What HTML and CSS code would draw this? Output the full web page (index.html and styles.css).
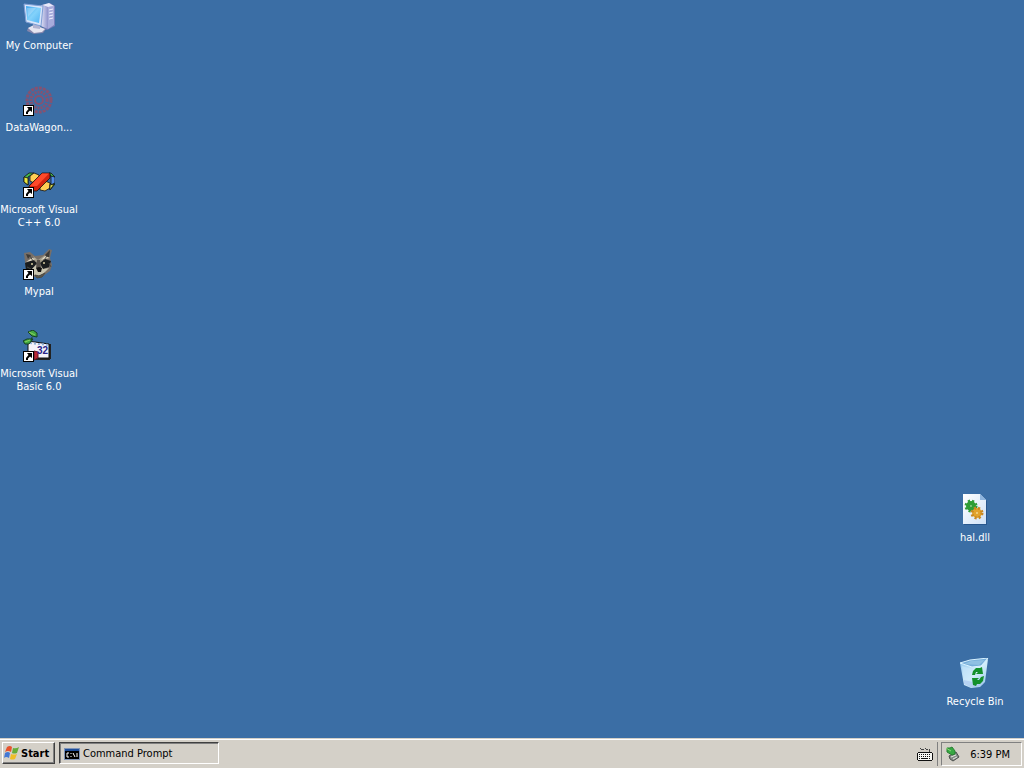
FILE: index.html
```html
<!DOCTYPE html>
<html lang="en">
<head>
<meta charset="utf-8">
<title>Desktop</title>
<link rel="stylesheet" href="styles.css">
</head>
<body>
<svg class="defs" width="0" height="0" aria-hidden="true">
  <defs>
    <linearGradient id="screen" x1="0" y1="0" x2="1" y2="1"><stop offset="0" stop-color="#3fa5ee"/><stop offset=".5" stop-color="#83d2fb"/><stop offset="1" stop-color="#4fb2f3"/></linearGradient>
    <linearGradient id="tower" x1="0" y1="0" x2="1" y2="0"><stop offset="0" stop-color="#dfe1f5"/><stop offset="1" stop-color="#8f93cc"/></linearGradient>
    <linearGradient id="bin" x1="0" y1="0" x2="1" y2="1"><stop offset="0" stop-color="#8cc4ee"/><stop offset=".5" stop-color="#d5effb"/><stop offset="1" stop-color="#8fc4e8"/></linearGradient>
    <linearGradient id="page" x1="0" y1="0" x2="1" y2="1"><stop offset="0" stop-color="#fff"/><stop offset="1" stop-color="#cfe2f8"/></linearGradient>
    <g id="shortcut"><path d="M0 21h11v11H0z" fill="#000"/><path d="M1 22h9v9H1z" fill="#fff"/><path d="M4 23h5v5l-2-1.500-2 2V30H3v-2l2.500-3z" fill="#000"/></g>
  </defs>
</svg>
<main class="desktop">
  <nav class="icons" aria-label="Desktop icons">
    <a class="item" href="#computer">
      <svg class="icon" viewBox="0 0 32 32">
        <path d="M19 3l8-2 5 3v20l-8 4-6-4z" fill="#777cba"/>
        <path d="M18 3l7 2v22l-7-3z" fill="url(#tower)"/><path d="M25 5l6-1v19l-6 4z" fill="#a7abdb"/><path d="M19 3l7-2 5 3-6 1z" fill="#e7e9fa"/>
        <path d="M26 8l4-1M26 11l4-1M26 14l4-1M26 17l4-1" stroke="#f0f0ff" stroke-width="1"/>
        <path d="M5 26l6-3 12 4-3 4-9 1-7-3z" fill="#8486ac"/><path d="M5 26l6-3 11 4-3 3-8 1z" fill="#e6e5f0"/>
        <path d="M10 21l7 1v5l-7-1z" fill="#b1b3d1"/>
        <path d="M1 2l19 2-2 20L3 20z" fill="#d8e5fa" stroke="#7e9ed5"/><path d="M3 4l15 2-2 15L4 18z" fill="url(#screen)"/>
        <path d="M4 6l9 0-8 9z" fill="#fff" opacity=".25"/>
      </svg><span class="label">My Computer</span></a>
    <a class="item" href="#datawagon">
      <svg class="icon" viewBox="0 0 32 32">
        <g fill="none" stroke="#b64150" opacity=".6"><circle cx="16" cy="16" r="12" stroke-width="3" stroke-dasharray="3 1"/><circle cx="16" cy="16" r="8" stroke-width="3" stroke-dasharray="2 1"/><circle cx="16" cy="16" r="4" stroke-width="2"/></g>
        <use href="#shortcut"/>
      </svg><span class="label">DataWagon...</span></a>
    <a class="item" href="#visual-cpp">
      <svg class="icon" viewBox="0 0 32 32" stroke="#111" stroke-width=".8">
        <path d="M1 11l5-4h5l-6 4v8l-4-3z" fill="#45b94a"/><path d="M1 11l4 1v7l-4-3z" fill="#e8e53f"/>
        <path d="M7 10l4-3 5 2v5l-5 3-4-2z" fill="#ffce55"/><path d="M17 19l5-4 5 2v5l-5 3-5-1z" fill="#ffce55"/>
        <path d="M26 7h2l4 4v7l-5 6v-6l2-2v-4z" fill="#45b94a"/><path d="M28 10l4 1v6l-4 2z" fill="#508ce9"/><path d="M27 19l4-1-4 6z" fill="#eded54"/>
        <path d="M6 20L19 7l8 0v5L14 25l-8 0z" fill="#d5240f"/><path d="M7 20L19 7.500h7L14 20z" fill="#ff4a2a" stroke="none"/>
        <g stroke="none"><use href="#shortcut"/></g>
      </svg><span class="label">Microsoft Visual<br>C++ 6.0</span></a>
    <a class="item" href="#mypal">
      <svg class="icon" viewBox="0 0 32 32">
        <path d="M1 5l6-1 5 4 8-1 6-6 3 1-2 8 2 7-2 6-7 5-5 2-6-2-6-7-1-7z" fill="#776f68"/>
        <path d="M3 6l5 1-3 4zM22 7l5-5-1 8z" fill="#3c3a37"/><path d="M10 8l5 4 7-5-3 8h-6z" fill="#a09a88"/>
        <path d="M2 15l8-3 4 3-5 6-6 1zM17 15l5-4 6 2-2 6-6 2z" fill="#191c1e"/><path d="M3 14l6-4 4 1-6 2zM18 12l4-4 5 2-6 1z" fill="#e4dcc7"/>
        <path d="M3 22l6-1 4-4 4 0 3 4 6-1-6 6-5 2-6-2z" fill="#c9c5b0"/><path d="M14 12h3l1 8h-5z" fill="#55504a"/><path d="M13 20l3-1 3 1-1 4h-3z" fill="#111"/><circle cx="9" cy="16" r="1" fill="#d7cda0"/><circle cx="21" cy="15" r="1" fill="#d7cda0"/>
        <path d="M12 27l4 1 6-3-3 4-5 1zM7 8l3 5M24 8l-3 4M26 15l2 4M4 19l4 2" stroke="#4b4a43" fill="#5f594e"/>
        <use href="#shortcut"/>
      </svg><span class="label">Mypal</span></a>
    <a class="item" href="#visual-basic">
      <svg class="icon" viewBox="0 0 32 32">
        <path d="M8 28h19v2H8zM26 14h2v15h-2z" fill="#222"/><path d="M5 11l21 3v14H9L5 23z" fill="#f4f3fb" stroke="#111"/><path d="M7 13l18 2" stroke="#92b2d8" stroke-width="2" stroke-dasharray="2 2"/>
        <path d="M11 21l4 1v6l-4 2z" fill="#b92734" stroke="#651520"/>
        <text class="number" x="14" y="24">32</text>
        <path d="M5 2l5-2 4 3v4l-5-1zM0 11l4-2 6 0-4 5H2z" fill="#42a744" stroke="#153f20"/><path d="M6 2l6 3M2 12l5-2" stroke="#8bd45d"/><path d="M9 7l-1 5" stroke="#174d22"/>
        <use href="#shortcut"/>
      </svg><span class="label">Microsoft Visual<br>Basic 6.0</span></a>
    <a class="item hal" href="#hal">
      <svg class="icon" viewBox="0 0 32 32">
        <path d="M5 1h17l6 6v24H5z" fill="#28578e"/><path d="M4 0h17l6 6v24H4z" fill="url(#page)"/><path d="M21 0v6h6z" fill="#8eb5df"/>
        <circle cx="12" cy="12" r="3" fill="#8ccc84" stroke="#2f9d36" stroke-width="4"/><circle cx="12" cy="12" r="5" fill="none" stroke="#2f9d36" stroke-width="3" stroke-dasharray="2 2"/>
        <circle cx="18" cy="19" r="3" fill="#f5d68b" stroke="#e2a32c" stroke-width="4"/><circle cx="18" cy="19" r="5" fill="none" stroke="#c98822" stroke-width="3" stroke-dasharray="2 2"/>
      </svg><span class="label">hal.dll</span></a>
    <a class="item recycle" href="#recycle">
      <svg class="icon" viewBox="0 0 32 32">
        <path d="M1 5l12 3L29 1l-3 23-5 5-9 1-7-3z" fill="url(#bin)"/><path d="M1 5l10-3 18-2-7 8-9 1z" fill="#75add9" stroke="#d9f2ff"/><path d="M5 6l7-3 14-1-6 5z" fill="#8fc0e3"/><path d="M3 8l10 3 1 17-6-1-3-2z" fill="#c9e7fb" opacity=".65"/><path d="M5 22l9 2 11-2-1 4-5 3-8 0-6-3z" fill="#aac6ee" opacity=".65"/>
        <path d="M13 17l1-4 3-3h4l2-1 1 7h-7l2-2-2 0-1 3zM25 18l-1 5-3 3h-3l-1 2-3-1-1-7h7l-2 2h2l2-3z" fill="#13902c"/>
      </svg><span class="label">Recycle Bin</span></a>
  </nav>
</main>
<footer class="taskbar">
  <button class="start" type="button">
    <svg class="small" viewBox="0 0 16 16"><path d="M3 2q3-2 5 0L7 7Q4 5 1 7z" fill="#e7532d"/><path d="M9 3q3 1 6-1l-2 6q-3 1-5 0z" fill="#66ad38"/><path d="M1 8q3-2 5 0l-1 5q-3-2-5 0z" fill="#4378d4"/><path d="M7 9q3 1 6 0l-2 5q-3 1-5 0z" fill="#efbd27"/></svg>Start</button>
  <button class="task" type="button">
    <svg class="small" viewBox="0 0 16 16"><path d="M0 2h16v12H0z" fill="#7e94b8"/><path d="M1 3h14v10H1z" fill="#000"/><path d="M1 3h14v2H1z" fill="#1c4c9a"/><path d="M5 7H3v4h2M7 7v1M7 10v1M9 7l2 4M13 7v4" fill="none" stroke="#fff"/></svg>Command Prompt</button>
  <span class="space"></span>
  <button class="keyboard" type="button" aria-label="Keyboard">
    <svg class="small" viewBox="0 0 16 16" shape-rendering="crispEdges"><path d="M3 1h1v1h2v1h-2v-1h-1zM6 2h1v1h-1zM8 1h1v1h2v1h-2v-1h-1zM12 2h1v3h-1z" fill="#444"/><path d="M1 5h14v1h1v7h-1v1H1v-1H0V6h1z" fill="#111"/><path d="M1 6h14v7H1z" fill="#f8f8f4"/><path d="M2 7.500h12M2 9.500h12" stroke="#111" stroke-dasharray="1 1"/><path d="M2 11h1v1H2zM4 11h7v1H4zM12 11h1v1h-1z" fill="#111"/></svg></button>
  <div class="tray">
    <button class="trayicon" type="button" aria-label="Safely remove hardware"><svg class="small" viewBox="0 0 16 16"><path d="M4 10l7-4 3 5-6 4-3-2z" fill="#858b88" stroke="#4c504d"/><path d="M6 11l5-2M8 13l4-2" stroke="#e4e9df"/><path d="M2 2l3 0 2-1 3 4 0 3-3 1-5-3z" fill="#37a842" stroke="#287f32"/><path d="M1 2l5 3" stroke="#8bdb75"/></svg></button>
    <time datetime="18:39">6:39 PM</time>
  </div>
</footer>
</body>
</html>
```
FILE: styles.css
```css
* { box-sizing: border-box; }
body {
  display: flex;
  flex-direction: column;
  min-height: 100vh;
  margin: 0;
  background: #3b6ea5;
  color: #000;
  font: 11px/13px Tahoma, "DejaVu Sans Condensed", "Noto Sans", sans-serif;
}
.defs { position: absolute; }
.desktop { flex: 1; }
.icons {
  display: grid;
  grid-template-columns: 78px 78px;
  grid-template-rows: repeat(8, 82px) auto;
  justify-content: space-between;
  padding: 2px 10px 0 0;
}
.item {
  grid-column: 1;
  display: flex;
  flex-direction: column;
  align-items: center;
  gap: 5px;
  color: #fff;
  text-align: center;
  text-decoration: none;
  white-space: nowrap;
}
.hal { grid-area: 7 / 2; }
.recycle { grid-area: 9 / 2; }
.icon { width: 32px; height: 32px; flex: none; }
.number { font: bold 10px "Liberation Sans", sans-serif; fill: #282488; }
.taskbar {
  display: flex;
  align-items: stretch;
  height: 30px;
  padding: 3px 2px 2px;
  background: #d4d0c8;
  border-top: 1px solid #d4d0c8;
  box-shadow: inset 0 1px #fff;
}
button {
  display: flex;
  align-items: center;
  margin: 0;
  border: 0;
  background: none;
  color: inherit;
  font: inherit;
}
.small { width: 16px; height: 16px; flex: none; }
.start {
  gap: 1px;
  width: 53px;
  height: 22px;
  padding: 0 1px;
  border: 1px solid;
  border-color: #fff #404040 #404040 #fff;
  box-shadow: inset -1px -1px #808080;
  font-weight: bold;
}
.task {
  gap: 3px;
  width: 160px;
  height: 22px;
  margin-left: 4px;
  padding: 1px 4px 0;
  border: 1px solid;
  border-color: #404040 #fff #fff #404040;
  box-shadow: inset 1px 1px #808080;
}
.space { flex: 1; }
.keyboard { padding: 2px 6px 0; }
.tray {
  display: flex;
  align-items: center;
  gap: 9px;
  margin-left: 2px;
  padding: 0 11px 0 3px;
  border: 1px solid;
  border-color: #808080 #fff #fff #808080;
  box-shadow: -3px 0 #d4d0c8, -4px 0 #808080;
}
.trayicon { padding: 0; }
```
